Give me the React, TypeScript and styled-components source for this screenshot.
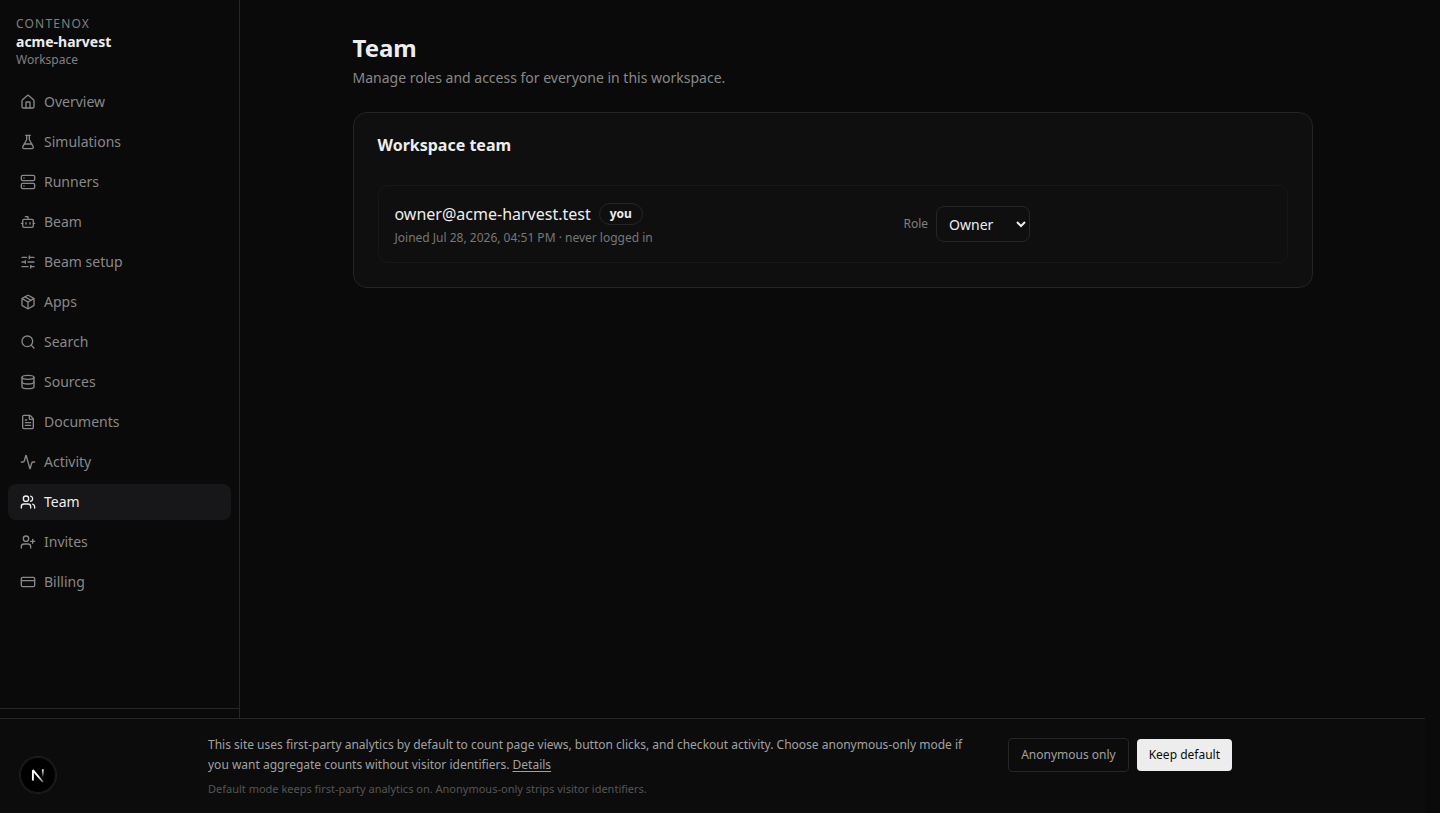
import React from "react";
import styled, { createGlobalStyle } from "styled-components";
import {
  House, FlaskConical, Server, Bot, SlidersHorizontal, Package, Search,
  Database, FileText, Activity, Users, UserPlus, CreditCard, LucideIcon,
} from "lucide-react";

const GlobalStyle = createGlobalStyle`
  *, *::before, *::after { box-sizing: border-box; }
  html { background: #0a0a0a; }
  body { margin: 0; background: #0a0a0a; color: #ededed; font-family: "Noto Sans", sans-serif; overflow: hidden; }
  h1, h2, p { margin: 0; }
`;

const Shell = styled.div`
  display: flex;
  height: 813px;
  padding-right: 15px;
`;

const Sidebar = styled.aside`
  width: 240px;
  flex: none;
  display: flex;
  flex-direction: column;
  border-right: 1px solid #262626;
`;

const Brand = styled.div`
  padding: 16px 16px 0;
  height: 76px;
`;

const BrandName = styled.div`
  font-size: 12px;
  line-height: 16px;
  letter-spacing: 1.2px;
  color: #808080;
`;

const WorkspaceName = styled.div`
  font-size: 14px;
  line-height: 20px;
  font-weight: 700;
`;

const WorkspaceKind = styled.div`
  font-size: 12px;
  line-height: 16px;
  color: #808080;
`;

const Nav = styled.nav`
  display: flex;
  flex-direction: column;
  gap: 4px;
  padding: 8px;
  flex: 1;
`;

const NavItem = styled.a<{ $active?: boolean }>`
  display: flex;
  align-items: center;
  gap: 8px;
  height: 36px;
  padding: 0 12px;
  border-radius: 8px;
  font-size: 14px;
  line-height: 20px;
  color: ${(p) => (p.$active ? "#ededed" : "#888888")};
  background: ${(p) => (p.$active ? "#171719" : "transparent")};
`;

const SidebarFooter = styled.div`
  height: 105px;
  border-top: 1px solid #262626;
`;

const Main = styled.main`
  flex: 1;
  padding-top: 32px;
`;

const Content = styled.div`
  width: 960px;
  margin: 0 auto;
`;

const Title = styled.h1`
  font-size: 24px;
  line-height: 32px;
  font-weight: 700;
`;

const Subtitle = styled.p`
  margin-top: 4px;
  font-size: 14px;
  line-height: 20px;
  color: #888888;
`;

const Card = styled.section`
  margin-top: 24px;
  padding: 24px;
  height: 176px;
  border: 1px solid #242424;
  border-radius: 14px;
  background: #0f0f0f;
`;

const CardTitle = styled.h2`
  font-size: 16px;
  line-height: 16px;
  font-weight: 700;
`;

const Member = styled.div`
  display: grid;
  grid-template-columns: 509px 1fr;
  align-items: center;
  margin-top: 32px;
  height: 78px;
  padding: 0 16px;
  border: 1px solid #171717;
  border-radius: 10px;
`;

const Identity = styled.div`
  display: flex;
  align-items: center;
  gap: 8px;
  font-size: 16px;
  line-height: 24px;
`;

const Badge = styled.span`
  display: inline-flex;
  align-items: center;
  height: 22px;
  padding: 0 10px;
  border: 1px solid #242424;
  border-radius: 11px;
  font-size: 12px;
  line-height: 16px;
  font-weight: 700;
`;

const Joined = styled.p`
  margin-top: 4px;
  font-size: 12px;
  line-height: 16px;
  color: #777777;
`;

const RoleField = styled.label`
  display: flex;
  align-items: center;
  gap: 8px;
  font-size: 12px;
  line-height: 16px;
  color: #808080;
`;

const RoleSelect = styled.select`
  width: 94px;
  height: 36px;
  padding: 0 0 0 8px;
  border: 1px solid #262626;
  border-radius: 8px;
  background: #0f0f0f;
  color: #ededed;
  font-family: inherit;
  font-size: 14px;
`;

const ConsentBar = styled.div`
  position: fixed;
  left: 0;
  right: 15px;
  bottom: 0;
  height: 95px;
  border-top: 1px solid #262626;
  background: #0c0c0c;
`;

const ConsentInner = styled.div`
  display: flex;
  justify-content: space-between;
  align-items: flex-start;
  width: 1024px;
  margin-left: 208px;
  padding-top: 16px;
`;

const ConsentText = styled.div`
  width: 768px;
  font-size: 12px;
  line-height: 20px;
  color: #a1a1a1;
`;

const DetailsLink = styled.a`
  text-decoration: underline;
  text-underline-offset: 2px;
`;

const ConsentNote = styled.p`
  margin-top: 6px;
  font-size: 11px;
  line-height: 16px;
  color: #555555;
`;

const Actions = styled.div`
  display: flex;
  align-items: center;
  gap: 8px;
  margin-top: 3px;
`;

const ConsentButton = styled.button<{ $primary?: boolean }>`
  height: ${(p) => (p.$primary ? 32 : 34)}px;
  padding: 0 12px;
  border: ${(p) => (p.$primary ? "0" : "1px solid #262626")};
  border-radius: 4px;
  background: ${(p) => (p.$primary ? "#ededed" : "transparent")};
  color: ${(p) => (p.$primary ? "#0a0a0a" : "#a1a1a1")};
  font-family: inherit;
  font-size: 12px;
  line-height: 16px;
`;

const DevBadge = styled.div`
  position: fixed;
  left: 20px;
  bottom: 20px;
  width: 36px;
  height: 36px;
  display: grid;
  place-items: center;
  border-radius: 50%;
  background: #000;
  box-shadow: 0 0 0 1px #202020, inset 0 0 0 1px #1a1a1a;
`;

const items: { label: string; icon: LucideIcon }[] = [
  { label: "Overview", icon: House },
  { label: "Simulations", icon: FlaskConical },
  { label: "Runners", icon: Server },
  { label: "Beam", icon: Bot },
  { label: "Beam setup", icon: SlidersHorizontal },
  { label: "Apps", icon: Package },
  { label: "Search", icon: Search },
  { label: "Sources", icon: Database },
  { label: "Documents", icon: FileText },
  { label: "Activity", icon: Activity },
  { label: "Team", icon: Users },
  { label: "Invites", icon: UserPlus },
  { label: "Billing", icon: CreditCard },
];

function NextMark() {
  return (
    <svg width="36" height="36" viewBox="0 0 36 36" fill="none">
      <defs>
        <linearGradient id="diag" x1="19" y1="19" x2="23.5" y2="25" gradientUnits="userSpaceOnUse">
          <stop stopColor="#fff" />
          <stop offset="1" stopColor="#fff" stopOpacity="0.35" />
        </linearGradient>
        <linearGradient id="stem" x1="23" y1="12" x2="23" y2="20.5" gradientUnits="userSpaceOnUse">
          <stop stopColor="#fff" />
          <stop offset="1" stopColor="#fff" stopOpacity="0" />
        </linearGradient>
      </defs>
      <path d="M12.9 23.6V13.2L22.9 25" stroke="url(#diag)" strokeWidth="1.9" strokeLinejoin="bevel" />
      <path d="M22.8 12.3V21" stroke="url(#stem)" strokeWidth="1.8" />
    </svg>
  );
}

export default function App() {
  return (
    <>
      <GlobalStyle />
      <Shell>
        <Sidebar>
          <Brand>
            <BrandName>CONTENOX</BrandName>
            <WorkspaceName>acme-harvest</WorkspaceName>
            <WorkspaceKind>Workspace</WorkspaceKind>
          </Brand>
          <Nav>
            {items.map(({ label, icon: Icon }) => (
              <NavItem key={label} $active={label === "Team"}>
                <Icon size={16} />
                {label}
              </NavItem>
            ))}
          </Nav>
          <SidebarFooter />
        </Sidebar>
        <Main>
          <Content>
            <Title>Team</Title>
            <Subtitle>Manage roles and access for everyone in this workspace.</Subtitle>
            <Card>
              <CardTitle>Workspace team</CardTitle>
              <Member>
                <div>
                  <Identity>
                    owner@acme-harvest.test
                    <Badge>you</Badge>
                  </Identity>
                  <Joined>Joined Jul 28, 2026, 04:51 PM · never logged in</Joined>
                </div>
                <RoleField>
                  Role
                  <RoleSelect defaultValue="Owner">
                    <option>Owner</option>
                  </RoleSelect>
                </RoleField>
              </Member>
            </Card>
          </Content>
        </Main>
      </Shell>
      <ConsentBar>
        <ConsentInner>
          <ConsentText>
            <p>
              This site uses first-party analytics by default to count page views, button clicks, and checkout
              activity. Choose anonymous-only mode if you want aggregate counts without visitor identifiers.{" "}
              <DetailsLink>Details</DetailsLink>
            </p>
            <ConsentNote>
              Default mode keeps first-party analytics on. Anonymous-only strips visitor identifiers.
            </ConsentNote>
          </ConsentText>
          <Actions>
            <ConsentButton>Anonymous only</ConsentButton>
            <ConsentButton $primary>Keep default</ConsentButton>
          </Actions>
        </ConsentInner>
      </ConsentBar>
      <DevBadge>
        <NextMark />
      </DevBadge>
    </>
  );
}
